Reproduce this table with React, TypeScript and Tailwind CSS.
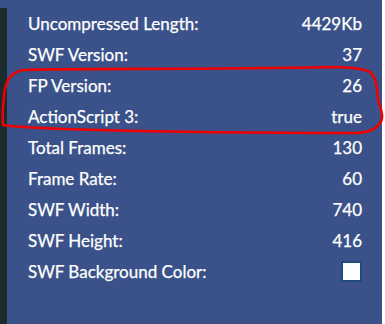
import React from "react";

const rows: { label: string; value?: string; checkbox?: boolean }[] = [
  { label: "Uncompressed Length:", value: "4429Kb" },
  { label: "SWF Version:", value: "37" },
  { label: "FP Version:", value: "26" },
  { label: "ActionScript 3:", value: "true" },
  { label: "Total Frames:", value: "130" },
  { label: "Frame Rate:", value: "60" },
  { label: "SWF Width:", value: "740" },
  { label: "SWF Height:", value: "416" },
  { label: "SWF Background Color:", checkbox: true },
];

export default function App() {
  return (
    <div className="relative w-[385px] h-[324px] bg-white overflow-hidden">
      <div
        className="flex w-[382px] h-[324px] bg-[#3a5289] text-white text-[17px]"
        style={{ fontFamily: "Lato, 'Noto Sans', sans-serif", WebkitTextStroke: "0.25px #ffffff" }}
      >
        <div className="w-[7px] mt-[8px] bg-[#1b2a2b] shrink-0" />
        <div className="flex-1 flex flex-col pt-[8px] pl-[21px] pr-[20px]">
          {rows.map((r) => (
            <div key={r.label} className="flex items-center justify-between h-[31px] leading-[31px]">
              <span>{r.label}</span>
              {r.checkbox ? (
                <span className="block w-[21px] h-[21px] bg-white border-2 border-[#1e4a7c]" />
              ) : (
                <span>{r.value}</span>
              )}
            </div>
          ))}
        </div>
      </div>
      <svg
        className="absolute left-0 top-0 pointer-events-none"
        width="385"
        height="324"
        viewBox="0 0 385 324"
      >
        <path
          d="M23 70 C 80 68, 200 70, 330 67 C 350 67, 362 68, 370 72 C 377 78, 377 90, 378 98 C 379 106, 383 112, 382 118 C 381 126, 372 132, 358 133 C 300 133, 200 133, 100 130 C 60 129, 20 128, 3 125 C 2 115, 3 105, 4 95 C 5 86, 7 80, 11 76 C 15 72, 19 71, 23 70 Z"
          fill="none"
          stroke="#f00000"
          strokeWidth="2.6"
        />
      </svg>
    </div>
  );
}
